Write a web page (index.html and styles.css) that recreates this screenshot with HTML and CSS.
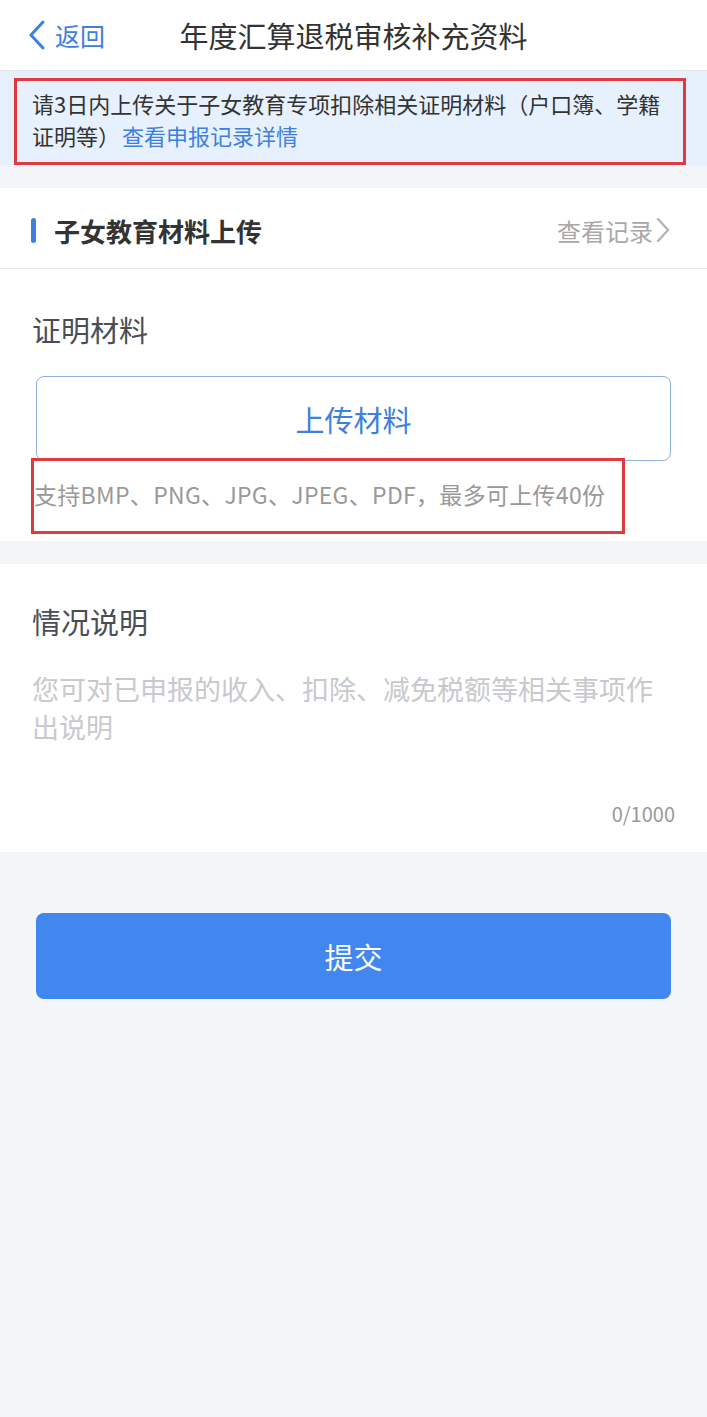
FILE: index.html
```html
<!DOCTYPE html>
<html lang="zh-CN">
<head>
    <meta charset="UTF-8">
    <meta name="viewport" content="width=device-width, initial-scale=1.0">
    <title>年度汇算退税审核补充资料</title>
    <link rel="stylesheet" href="styles.css">
</head>
<body>
    <div class="top-bar">
        <div class="back">
            <svg class="back-icon" width="18" height="30" viewBox="0 0 18 30">
                <path d="M15 2 L3 15 L15 28" fill="none" stroke="#3d80e0" stroke-width="3" stroke-linecap="round" stroke-linejoin="round"/>
            </svg>
            <span>返回</span>
        </div>
        <div class="page-title">年度汇算退税审核补充资料</div>
        <div></div>
    </div>

    <div class="notice">
        <div class="notice-box mark">
            请3日内上传关于子女教育专项扣除相关证明材料（户口簿、学籍证明等）<span class="link">查看申报记录详情</span>
        </div>
    </div>

    <div class="section-head">
        <div class="section-title"><i class="bar"></i>子女教育材料上传</div>
        <div class="record">
            查看记录
            <svg width="16" height="26" viewBox="0 0 16 26">
                <path d="M3 2 L13 13 L3 24" fill="none" stroke="#b4b4b4" stroke-width="2.4" stroke-linecap="round" stroke-linejoin="round"/>
            </svg>
        </div>
    </div>

    <div class="panel materials">
        <div class="label">证明材料</div>
        <div class="upload-btn">上传材料</div>
        <div class="hint mark">支持BMP、PNG、JPG、JPEG、PDF，最多可上传40份</div>
    </div>

    <div class="panel desc">
        <div class="label">情况说明</div>
        <div class="placeholder">您可对已申报的收入、扣除、减免税额等相关事项作出说明</div>
        <div class="counter">0/1000</div>
    </div>

    <div class="submit">提交</div>
</body>
</html>
```

FILE: styles.css
```css
body, html {
    margin: 0;
    min-height: 100%;
    font-family: "Noto Sans CJK SC", "Noto Sans", sans-serif;
    background-color: #f3f5f9;
}
.top-bar {
    height: 70px;
    background-color: white;
    border-bottom: 1px solid #e3e5e8;
    display: grid;
    grid-template-columns: 1fr auto 1fr;
    align-items: center;
}
.back {
    display: flex;
    align-items: center;
    padding-left: 28px;
    color: #3d80e0;
    font-size: 25px;
}
.back-icon {
    margin-right: 9px;
}
.page-title {
    font-size: 29px;
    color: #333;
}
.notice {
    background-color: #e7f1fd;
    padding: 7px 21px 0 14px;
}
.mark {
    border: 3px solid #e0393e;
}
.notice-box {
    padding: 6px 4px 11px 15px;
    font-size: 22px;
    line-height: 32px;
    color: #333;
}
.link {
    color: #3d80e0;
    margin-left: 2px;
}
.section-head {
    margin-top: 23px;
    height: 81px;
    background-color: white;
    border-bottom: 1px solid #e6e8eb;
    display: flex;
    align-items: center;
    justify-content: space-between;
    padding: 4px 36px 0 31px;
    box-sizing: border-box;
}
.section-title {
    display: flex;
    align-items: center;
    font-size: 26px;
    font-weight: bold;
    color: #333;
}
.bar {
    width: 5px;
    height: 25px;
    border-radius: 3px;
    background-color: #3d80e0;
    margin-right: 18px;
}
.record {
    display: flex;
    align-items: center;
    font-size: 24px;
    color: #a8a8a8;
}
.record svg {
    margin-left: 2px;
}
.panel {
    background-color: white;
    padding: 0 32px;
}
.label {
    font-size: 29px;
    line-height: 40px;
    color: #4a4d55;
}
.materials {
    padding-top: 40px;
    padding-bottom: 7px;
}
.upload-btn {
    margin: 27px 4px 0;
    height: 83px;
    border: 1px solid #8db0dc;
    border-radius: 8px;
    display: flex;
    align-items: center;
    justify-content: center;
    font-size: 29px;
    color: #3d80e0;
}
.hint {
    margin: -3px 0 0 -1px;
    width: 588px;
    padding: 13px 0 17px 0;
    font-size: 23px;
    letter-spacing: 0.3px;
    line-height: 40px;
    color: #999;
    white-space: nowrap;
}
.desc {
    margin-top: 23px;
    padding-top: 37px;
    padding-bottom: 26px;
}
.placeholder {
    margin-top: 29px;
    font-size: 27px;
    line-height: 38px;
    color: #c8c9cd;
}
.counter {
    margin-top: 56px;
    text-align: right;
    font-size: 20px;
    line-height: 24px;
    color: #999;
}
.submit {
    margin: 61px 36px 0;
    height: 86px;
    border-radius: 8px;
    background-color: #4287f0;
    color: white;
    font-size: 29px;
    display: flex;
    align-items: center;
    justify-content: center;
}
```
